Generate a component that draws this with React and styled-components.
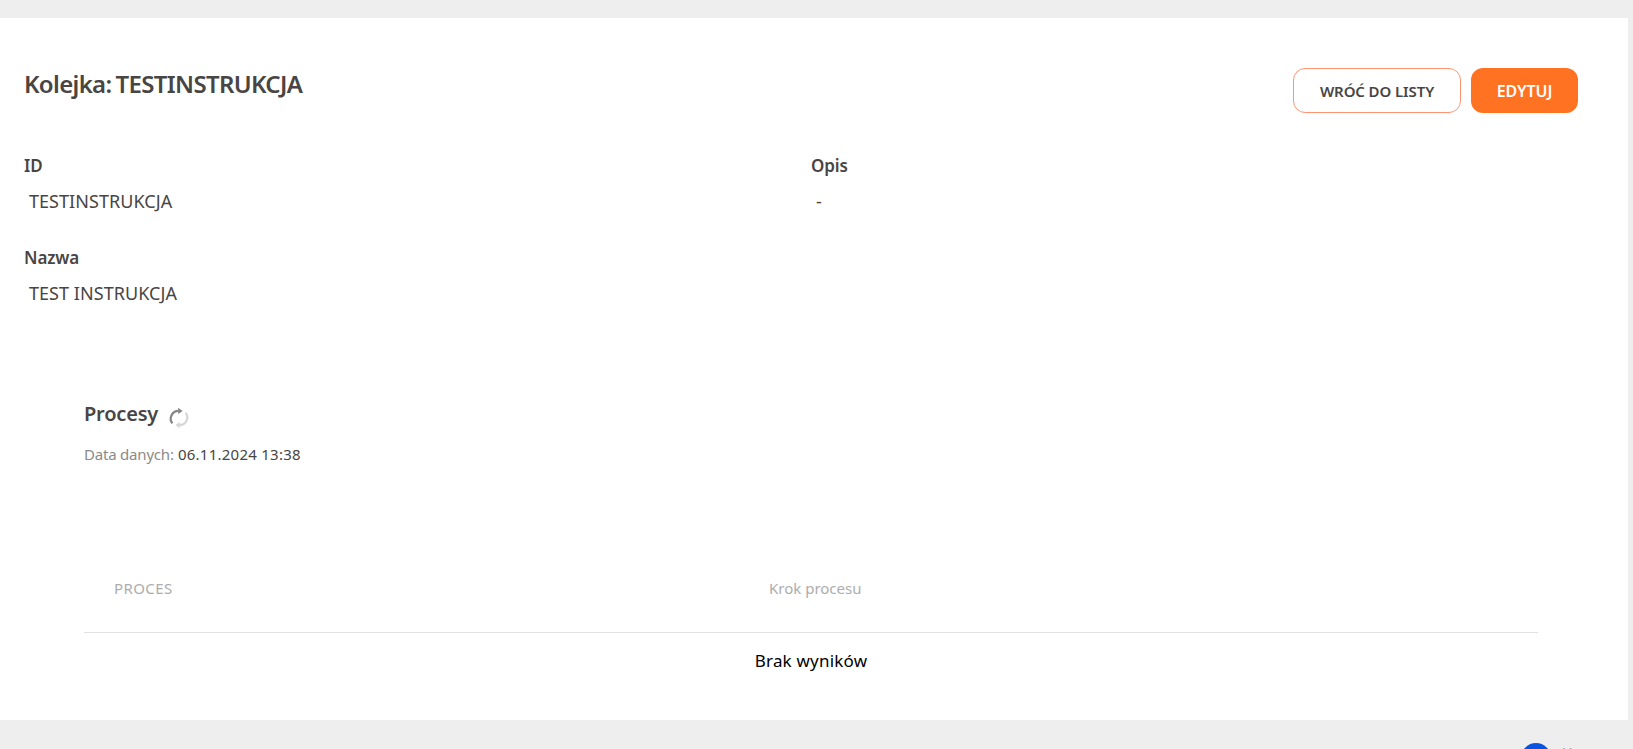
import React from "react";
import styled, { createGlobalStyle } from "styled-components";

const GlobalStyle = createGlobalStyle`
  html, body {
    margin: 0;
    height: 749px;
    overflow: hidden;
    background: #eeeeee;
    font-family: "Noto Sans", "Open Sans", sans-serif;
    color: #484543;
  }
`;

function RefreshIcon() {
  return (
    <RefreshSvg viewBox="0 0 20 20" fill="none" strokeWidth="2.2">
      <path d="M3.4 15.4A7.8 7.8 0 0 1 9.5 2.8" stroke="#858585" />
      <path d="M9.2 -.2 13.6 2.9 9.2 6Z" fill="#858585" />
      <path d="M16.6 4.6A7.8 7.8 0 0 1 10.5 17.2" stroke="#d6d6d6" />
      <path d="M10.8 14 6.4 17.1l4.4 3.1Z" fill="#d6d6d6" />
    </RefreshSvg>
  );
}

export default function App() {
  return (
    <Page>
      <GlobalStyle />
      <Card>
        <Header>
          <Title>Kolejka: TESTINSTRUKCJA</Title>
          <Actions>
            <OutlineButton>WRÓĆ DO LISTY</OutlineButton>
            <FilledButton>EDYTUJ</FilledButton>
          </Actions>
        </Header>
        <Details>
          <Column>
            <Field>
              <Label>ID</Label>
              <Value>TESTINSTRUKCJA</Value>
            </Field>
            <Field>
              <Label>Nazwa</Label>
              <Value>TEST INSTRUKCJA</Value>
            </Field>
          </Column>
          <Column>
            <Field>
              <Label>Opis</Label>
              <Value>-</Value>
            </Field>
          </Column>
        </Details>
        <Section>
          <SectionTitle>
            Procesy
            <RefreshIcon />
          </SectionTitle>
          <DataDate>
            <span>Data danych:</span> 06.11.2024 13:38
          </DataDate>
          <TableHead>
            <HeadCell $spacing="0.4px">PROCES</HeadCell>
            <HeadCell>Krok procesu</HeadCell>
          </TableHead>
          <EmptyRow>Brak wyników</EmptyRow>
        </Section>
      </Card>
      <Footer>
        <Dot />
        <FooterText>Ver</FooterText>
      </Footer>
    </Page>
  );
}

const Page = styled.div`
  padding-top: 18px;
  height: 749px;
  box-sizing: border-box;
  overflow: hidden;
`;

const Card = styled.div`
  width: 1628px;
  height: 702px;
  box-sizing: border-box;
  background: #fff;
  padding: 50px 24px 0;
`;

const Header = styled.div`
  display: flex;
  justify-content: space-between;
  align-items: flex-start;
  padding-right: 26px;
`;

const Title = styled.h1`
  margin: 1px 0 0;
  font-size: 24px;
  line-height: 30px;
  font-weight: 600;
  letter-spacing: -0.66px;
  word-spacing: -1.5px;
`;

const Actions = styled.div`
  display: flex;
  gap: 10px;
`;

const BaseButton = styled.button`
  height: 45px;
  box-sizing: border-box;
  border-radius: 12px;
  font-family: inherit;
  font-size: 15px;
  font-weight: 600;
  letter-spacing: -0.1px;
`;

const OutlineButton = styled(BaseButton)`
  width: 168px;
  background: #fff;
  border: 1px solid #ff9473;
  color: #484543;
`;

const FilledButton = styled(BaseButton)`
  width: 107px;
  background: #ff7222;
  border: none;
  color: #fff;
  font-size: 16px;
`;

const Details = styled.div`
  display: grid;
  grid-template-columns: 787px 1fr;
  margin-top: 41px;
`;

const Column = styled.div`
  display: flex;
  flex-direction: column;
  gap: 33px;
`;

const Field = styled.div`
  display: flex;
  flex-direction: column;
  gap: 11px;
`;

const Label = styled.div`
  font-size: 17px;
  line-height: 24px;
  font-weight: 600;
  letter-spacing: -0.1px;
`;

const Value = styled.div`
  font-size: 18px;
  line-height: 24px;
  padding-left: 5px;
  letter-spacing: 0.05px;
`;

const Section = styled.div`
  margin: 95px 66px 0 60px;
`;

const SectionTitle = styled.h2`
  display: flex;
  align-items: center;
  gap: 11px;
  margin: 0;
  font-size: 20px;
  line-height: 28px;
  font-weight: 600;
  letter-spacing: -0.2px;
`;

const RefreshSvg = styled.svg`
  width: 20px;
  height: 20px;
  margin-top: 8px;
  overflow: visible;
`;

const DataDate = styled.div`
  margin-top: 16px;
  font-size: 15px;
  line-height: 20px;
  letter-spacing: 0.25px;
  span {
    color: #8c8a88;
    letter-spacing: -0.2px;
  }
`;

const TableHead = styled.div`
  display: grid;
  grid-template-columns: 655px 1fr;
  height: 55px;
  box-sizing: border-box;
  margin-top: 114px;
  padding-left: 30px;
  border-bottom: 1px solid #e2e2e2;
  align-items: start;
`;

const HeadCell = styled.div`
  font-size: 15px;
  line-height: 20px;
  color: #adadad;
  letter-spacing: ${(props) => props.$spacing || "0"};
`;

const EmptyRow = styled.div`
  margin-top: 16px;
  text-align: center;
  font-size: 17px;
  line-height: 24px;
  color: #000;
  letter-spacing: 0.2px;
`;

const Footer = styled.div`
  display: flex;
  align-items: flex-start;
  gap: 12px;
  margin-top: 23px;
  padding-left: 1521px;
`;

const Dot = styled.div`
  width: 30px;
  height: 30px;
  flex-shrink: 0;
  border-radius: 50%;
  background: #0a52e0;
`;

const FooterText = styled.div`
  font-size: 14px;
  line-height: 16px;
  margin-top: 2px;
  color: #9a9a9a;
`;
